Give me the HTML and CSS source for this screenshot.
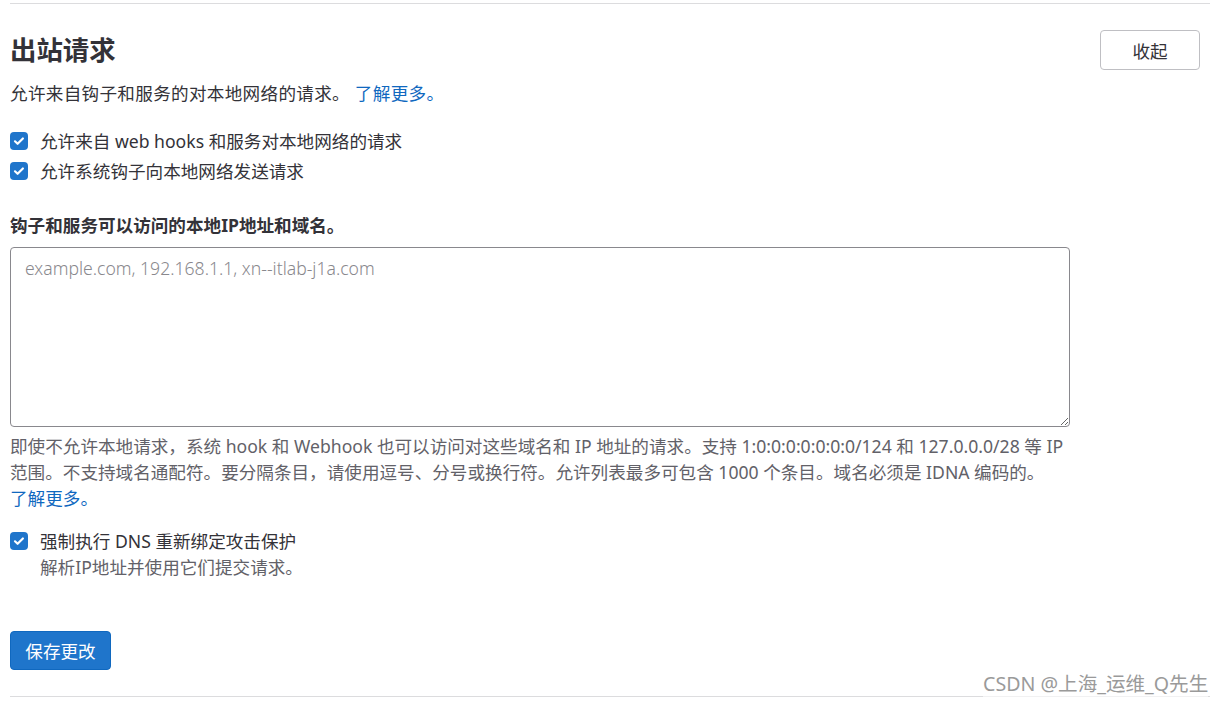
FILE: index.html
```html
<!DOCTYPE html>
<html lang="zh-CN">
<head>
<meta charset="utf-8">
<title>出站请求</title>
<link rel="stylesheet" href="styles.css">
</head>
<body>
<section class="settings">
  <div class="settings-header">
    <div class="header-text">
      <h2 class="title">出站请求</h2>
      <p class="desc">允许来自钩子和服务的对本地网络的请求。 <a class="link" href="#">了解更多。</a></p>
    </div>
    <button class="btn-collapse" type="button">收起</button>
  </div>
  <form class="form">
    <div class="check-group">
      <label class="check-row"><span class="checkbox"><svg viewBox="0 0 18 18" width="18" height="18"><path d="M5 9.3 L7.6 11.8 L12.9 6.5" fill="none" stroke="#fff" stroke-width="2.2" stroke-linecap="round" stroke-linejoin="round"/></svg></span><span class="check-label">允许来自 web hooks 和服务对本地网络的请求</span></label>
      <label class="check-row"><span class="checkbox"><svg viewBox="0 0 18 18" width="18" height="18"><path d="M5 9.3 L7.6 11.8 L12.9 6.5" fill="none" stroke="#fff" stroke-width="2.2" stroke-linecap="round" stroke-linejoin="round"/></svg></span><span class="check-label">允许系统钩子向本地网络发送请求</span></label>
    </div>
    <label class="field-label">钩子和服务可以访问的本地IP地址和域名。</label>
    <textarea class="textarea" placeholder="example.com, 192.168.1.1, xn--itlab-j1a.com"></textarea>
    <p class="help">即使不允许本地请求，系统 hook 和 Webhook 也可以访问对这些域名和 IP 地址的请求。支持 1:0:0:0:0:0:0:0/124 和 127.0.0.0/28 等 IP 范围。不支持域名通配符。要分隔条目，请使用逗号、分号或换行符。允许列表最多可包含 1000 个条目。域名必须是 IDNA 编码的。 <a class="link nowrap" href="#">了解更多。</a></p>
    <div class="dns">
      <label class="check-row dns-row"><span class="checkbox"><svg viewBox="0 0 18 18" width="18" height="18"><path d="M5 9.3 L7.6 11.8 L12.9 6.5" fill="none" stroke="#fff" stroke-width="2.2" stroke-linecap="round" stroke-linejoin="round"/></svg></span><span class="check-label">强制执行 DNS 重新绑定攻击保护</span></label>
      <p class="sub">解析IP地址并使用它们提交请求。</p>
    </div>
    <button class="btn-save" type="button">保存更改</button>
  </form>
</section>
<div class="watermark">CSDN @上海_运维_Q先生</div>
</body>
</html>
```

FILE: styles.css
```css
html, body {
  margin: 0;
  padding: 0;
  background: #fff;
}
body {
  font-family: "Segoe UI", "Noto Sans", "Noto Sans CJK SC", sans-serif;
  font-size: 17.6px;
  color: #333238;
  padding: 3px 12px 0 10px;
}
.settings {
  border-top: 1px solid #dcdcde;
  border-bottom: 1px solid #dcdcde;
  padding: 26px 0 26px;
}
.settings-header {
  display: flex;
  justify-content: space-between;
  align-items: flex-start;
}
.title {
  margin: 2px 0 0;
  font-size: 26.4px;
  line-height: 36px;
  font-weight: 700;
  color: #333238;
}
.desc {
  margin: 12px 0 0;
  line-height: 26px;
  letter-spacing: 0.3px;
}
.link {
  color: #1068bf;
  text-decoration: none;
}
.nowrap {
  white-space: nowrap;
}
.btn-collapse {
  margin-right: 10px;
  width: 100px;
  height: 40px;
  background: #fff;
  border: 1px solid #bfbfc3;
  border-radius: 4px;
  font-family: inherit;
  font-size: 17.6px;
  color: #333238;
}
.form {
  display: flex;
  flex-direction: column;
  align-items: flex-start;
}
.check-group {
  margin-top: 20px;
  display: flex;
  flex-direction: column;
}
.check-row {
  display: flex;
  align-items: center;
  height: 30px;
  gap: 12px;
}
.checkbox {
  width: 18px;
  height: 18px;
  border-radius: 4px;
  background: #1f75cb;
  display: flex;
}
.check-label {
  line-height: 26px;
}
.field-label {
  margin-top: 26px;
  line-height: 26px;
  font-weight: 700;
}
.textarea {
  margin-top: 9px;
  box-sizing: border-box;
  width: 1060px;
  height: 180px;
  border: 1px solid #89888d;
  border-radius: 4px;
  padding: 7px 14px;
  font-family: inherit;
  font-size: 17.6px;
  line-height: 26px;
  color: #333238;
  resize: vertical;
}
.textarea::placeholder {
  color: #89888d;
  font-weight: 300;
}
.help {
  margin: 6px 0 0;
  width: 1060px;
  line-height: 26px;
  color: #626168;
}
.dns {
  margin-top: 17px;
}
.dns-row {
  height: 26px;
}
.sub {
  margin: 0 0 0 30px;
  line-height: 26px;
  color: #626168;
}
.btn-save {
  margin-top: 51px;
  width: 101px;
  height: 39px;
  border: 1px solid #1068bf;
  border-radius: 4px;
  background: #1f75cb;
  color: #fff;
  font-family: inherit;
  font-size: 17.6px;
}
.watermark {
  position: absolute;
  left: 983px;
  top: 670px;
  font-size: 19.6px;
  line-height: 28px;
  color: #9a9a9a;
  background: rgba(255,255,255,0.6);
}
```
